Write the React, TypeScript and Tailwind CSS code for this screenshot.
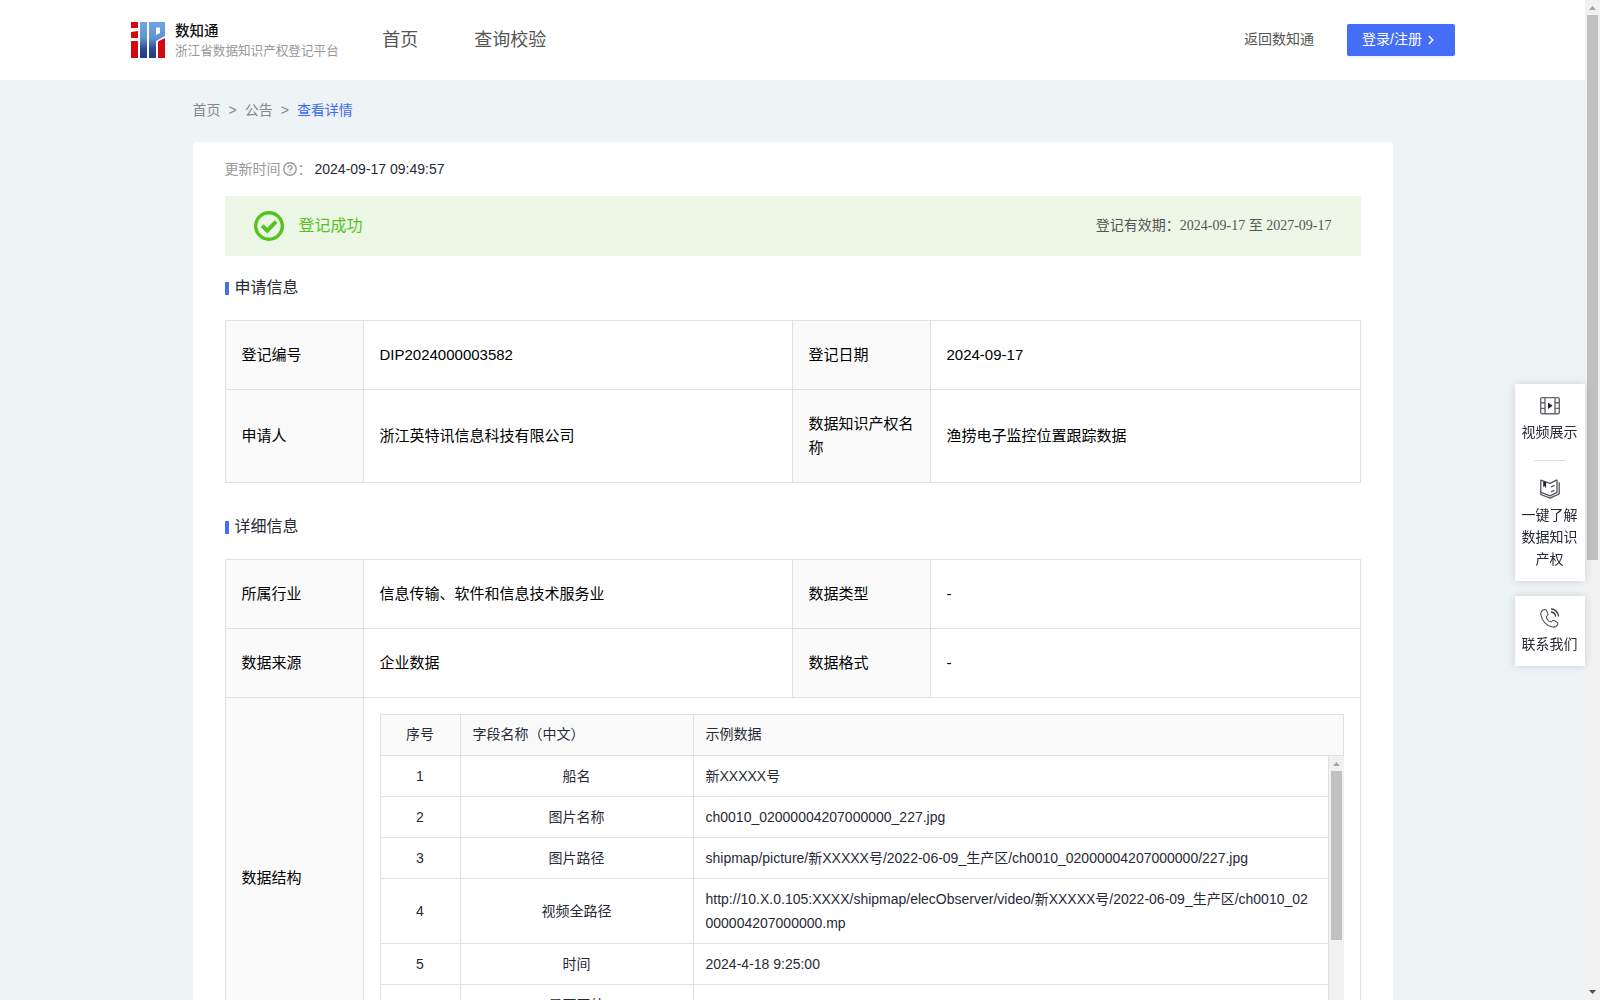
import type { ReactNode } from "react";

const applyInfo = [
  { label: "登记编号", value: "DIP2024000003582" },
  { label: "登记日期", value: "2024-09-17" },
  { label: "申请人", value: "浙江英特讯信息科技有限公司" },
  { label: "数据知识产权名称", value: "渔捞电子监控位置跟踪数据" },
];

const detailInfo = [
  { label: "所属行业", value: "信息传输、软件和信息技术服务业" },
  { label: "数据类型", value: "-" },
  { label: "数据来源", value: "企业数据" },
  { label: "数据格式", value: "-" },
];

const fields = [
  { name: "船名", sample: "新XXXXX号" },
  { name: "图片名称", sample: "ch0010_02000004207000000_227.jpg" },
  { name: "图片路径", sample: "shipmap/picture/新XXXXX号/2022-06-09_生产区/ch0010_02000004207000000/227.jpg" },
  {
    name: "视频全路径",
    sample: "http://10.X.0.105:XXXX/shipmap/elecObserver/video/新XXXXX号/2022-06-09_生产区/ch0010_02000004207000000.mp",
  },
  { name: "时间", sample: "2024-4-18 9:25:00" },
  { name: "是否国外", sample: "1" },
];

const Logo = () => (
  <svg width="34" height="36" viewBox="0 0 34 36">
    <defs>
      <linearGradient id="logoBlue" x1="0" y1="0" x2="0" y2="36" gradientUnits="userSpaceOnUse">
        <stop offset="0" stopColor="#6ea6e2" />
        <stop offset="0.45" stopColor="#6292d2" />
        <stop offset="0.75" stopColor="#2b4a94" />
        <stop offset="1" stopColor="#203c86" />
      </linearGradient>
    </defs>
    <path d="M0 0h7v6H0zM0 10l7-1v7H0zM0 19h7v17H0z" fill="#d20a10" />
    <path d="M9 0h7v36H9z" fill="url(#logoBlue)" />
    <path d="M18 0h16v14l-9 5v17h-7zM25 5.500v7.500l4-2V5.500z" fillRule="evenodd" fill="url(#logoBlue)" />
    <path d="M27 19.500l7-3.500v20h-7z" fill="#d20a10" />
  </svg>
);

const VideoIcon = () => (
  <svg width="20" height="20" viewBox="0 0 20 20" fill="none" stroke="#66676e" strokeWidth="1.4">
    <rect x="0.7" y="1.6" width="18.6" height="16.2" rx="1.5" />
    <path d="M5 1.6v16.2M15 1.6v16.2M0.7 6.8H5M0.7 12.4H5M15 6.8h4.3M15 12.4h4.3" />
    <path d="M8 6.5v6.4l4.6-3.2z" fill="#22232b" stroke="none" />
  </svg>
);

const BookIcon = () => (
  <svg width="20" height="20" viewBox="0 0 20 20" fill="none" stroke="#55565e" strokeWidth="1.3" strokeLinejoin="round">
    <path d="M17 0.800L10 4.400 0.800 1.200V15.500l9.200 3.700 9.200-4.400V3.200" />
    <path d="M17 0.800v12.600l-7 3.400L1 13.400" />
    <path d="M11 7.800l3.500-1.500M11 12.800l3.500-1.500" />
    <path d="M3.200 2v6.300l1.400-1.200 1.500 2.300V3.200z" fill="#22232b" stroke="none" />
  </svg>
);

const PhoneIcon = () => (
  <svg width="20" height="20" viewBox="0 0 20 20" fill="none" stroke="#55565d" strokeWidth="1.1" strokeLinecap="round" strokeLinejoin="round">
    <path d="M4.4 1.6C2 2.2.4 4.4 1 7.4c1 5.400 5.300 10 10.500 11.400 2.700.7 5.200-.4 6.200-2.400.5-1-.1-1.700-.8-2.200l-2.600-1.600c-.9-.5-1.600-.3-2.200.4l-.9 1c-2-.5-4.300-2.900-5-5.200l1.200-1.100c.7-.7.7-1.300.4-2.100L6.500 2.600c-.4-.9-1.200-1.200-2.100-1z" />
    <path d="M11.600 1c3.600.3 6.600 3.400 6.900 7M11.400 4c2.200.3 3.800 1.900 4.100 4" stroke="#33343c" strokeWidth="1.300" />
  </svg>
);

const SectionTitle = ({ children }: { children: ReactNode }) => (
  <div className="flex h-6 items-center text-[16px] leading-6 text-[#272a36]">
    <i className="mt-px mr-[6px] h-[13px] w-1 bg-[#446ef5]"></i>
    {children}
  </div>
);

const Cells = ({ items }: { items: { label: string; value: string }[] }) => (
  <>
    {items.map((item) => (
      <div key={item.label} className="contents">
        <div className="flex items-center border-r border-b border-[#e1e1e1] bg-[#fafafa] pr-[15px] pl-4">{item.label}</div>
        <div className="flex items-center border-r border-b border-[#e1e1e1] px-4">{item.value}</div>
      </div>
    ))}
  </>
);

const infoGrid =
  "grid grid-cols-[138px_429px_138px_430px] border-t border-l border-[#e1e1e1] text-[15px] leading-6 text-black";

const Header = () => (
  <header className="flex h-20 shrink-0 items-center bg-white pr-[130px] pl-[131px] text-[#555]">
    <Logo />
    <div className="ml-[10px] flex flex-col pt-[2px]">
      <span className="text-[14.500px] leading-[19px] font-medium text-[#111]">数知通</span>
      <span className="text-[12.600px] leading-5 text-[#999]">浙江省数据知识产权登记平台</span>
    </div>
    <nav className="ml-[43.500px] flex gap-14 text-[18px] leading-6">
      <a>首页</a>
      <a>查询校验</a>
    </nav>
    <a className="mr-[33px] ml-auto pb-px text-[14px]">返回数知通</a>
    <button className="flex h-8 w-[108px] items-center rounded-[2px] bg-[#446ef5] pb-px pl-[15px] text-[14px] text-white shadow-[0_2px_0_rgba(0,0,0,0.045)]">
      登录/注册
      <svg className="ml-[6px]" width="6" height="10" viewBox="0 0 6 10" fill="none" stroke="white" strokeWidth="1.400">
        <path d="M0.800 1l4 4-4 4" />
      </svg>
    </button>
  </header>
);

const FieldTable = () => (
  <div className="flex h-[420px] w-[964px] flex-col text-[14px] leading-6 text-[#272a36]">
    <div className="grid h-[42px] shrink-0 grid-cols-[80px_233px_1fr] border border-[#e1e1e1] bg-[#fafafa] leading-[39px]">
      <div className="border-r border-[#e1e1e1] text-center">序号</div>
      <div className="border-r border-[#e1e1e1] px-3">字段名称（中文）</div>
      <div className="px-3">示例数据</div>
    </div>
    <div className="flex min-h-0 flex-1">
      <div className="w-[949px] overflow-hidden border-l border-[#e1e1e1]">
        {fields.map((field, i) => (
          <div key={field.name} className="grid grid-cols-[80px_233px_635px]">
            <div className="flex items-center justify-center border-r border-b border-[#e1e1e1]">{i + 1}</div>
            <div className="flex items-center justify-center border-r border-b border-[#e1e1e1]">{field.name}</div>
            <div className="border-r border-b border-[#e1e1e1] py-2 pr-4 pl-3 break-all">{field.sample}</div>
          </div>
        ))}
      </div>
      <div className="flex w-[15px] flex-col items-center bg-[#f1f1f1]">
        <svg className="shrink-0" width="15" height="15" viewBox="0 0 15 15">
          <path d="M4 10l3.500-4 3.500 4z" fill="#a3a3a3" />
        </svg>
        <div className="h-[169px] w-[11px] bg-[#c1c1c1]"></div>
      </div>
    </div>
  </div>
);

const SidePanel = () => (
  <aside className="fixed top-[384px] right-[15px] flex w-[70px] flex-col gap-[15px] text-center text-[14px] leading-[22px] text-[#272a36]">
    <div className="flex h-[197px] flex-col items-center bg-white pt-3 shadow-[0_0_8px_rgba(0,0,0,0.15)]">
      <VideoIcon />
      <span className="mt-[5px] pr-px">视频展示</span>
      <i className="mt-[17px] h-px w-8 bg-[#ddd]"></i>
      <div className="mt-[18px]">
        <BookIcon />
      </div>
      <span className="mt-[5px] mr-px w-14">一键了解数据知识产权</span>
    </div>
    <div className="flex h-[70px] flex-col items-center bg-white pt-3 shadow-[0_0_8px_rgba(0,0,0,0.15)]">
      <PhoneIcon />
      <span className="mt-[5px] pr-px">联系我们</span>
    </div>
  </aside>
);

export default function App() {
  return (
    <div className="flex h-screen overflow-hidden bg-[#eef3f6] font-['Liberation_Sans','Noto_Sans_CJK_SC',sans-serif]">
      <div className="flex min-w-0 flex-1 flex-col overflow-hidden">
        <Header />
        <div className="mx-auto w-[1200px] shrink-0">
          <div className="flex h-[62px] items-center gap-2 pb-px text-[14px] text-[#888]">
            <span>首页</span>
            <span>&gt;</span>
            <span>公告</span>
            <span>&gt;</span>
            <span className="text-[#3a6af8]">查看详情</span>
          </div>

          <main className="rounded-[4px] bg-white px-8 pt-4">
            <div className="flex h-[22px] items-center text-[14px] leading-[22px] text-[#999]">
              更新时间
              <svg className="ml-[2px]" width="14" height="14" viewBox="0 0 14 14" fill="none" stroke="#999" strokeWidth="1.400">
                <circle cx="7" cy="7" r="6.200" />
                <path d="M5 5.600a2 1.900 0 1 1 3.200 1.500c-.8.500-1.200.7-1.200 1.500" />
                <circle cx="7" cy="10.200" r="0.800" fill="#999" stroke="none" />
              </svg>
              <span className="ml-px">：</span>
              <span className="ml-[3px] text-[#272a36]">2024-09-17 09:49:57</span>
            </div>

            <div className="mt-4 flex h-[60px] items-center bg-[#ecf7e6] px-[29px]">
              <svg width="30" height="30" viewBox="0 0 30 30" fill="none" stroke="#52c41a">
                <circle cx="15" cy="15" r="13.300" strokeWidth="3.400" />
                <path d="M8.200 14.800l5 4.800 8.900-9" strokeWidth="4" />
              </svg>
              <span className="ml-[15px] text-[16px] text-[#52c41a]">登记成功</span>
              <div className="ml-auto pb-[2px] font-['Liberation_Serif','Noto_Sans_CJK_SC',serif] text-[14px] text-[#555]">
                登记有效期：2024-09-17 至 2027-09-17
              </div>
            </div>

            <div className="mt-5">
              <SectionTitle>申请信息</SectionTitle>
            </div>
            <div className={`${infoGrid} mt-5 grid-rows-[69px_93px]`}>
              <Cells items={applyInfo} />
            </div>

            <div className="mt-8">
              <SectionTitle>详细信息</SectionTitle>
            </div>
            <div className={`${infoGrid} mt-5 grid-rows-[69px_69px]`}>
              <Cells items={detailInfo} />
              <div className="flex h-[361px] items-center border-r border-b border-[#e1e1e1] bg-[#fafafa] px-4">数据结构</div>
              <div className="col-span-3 h-[361px] overflow-hidden border-r border-[#e1e1e1] pt-4 pl-4">
                <FieldTable />
              </div>
            </div>
          </main>
        </div>
      </div>

      {/* page scrollbar */}
      <div className="flex w-[15px] shrink-0 flex-col items-center bg-[#f1f1f1]">
        <svg className="shrink-0" width="15" height="15" viewBox="0 0 15 15">
          <path d="M4 10l3.500-4 3.500 4z" fill="#a3a3a3" />
        </svg>
        <div className="h-[545px] w-[11px] bg-[#c1c1c1]"></div>
        <svg className="mt-auto shrink-0" width="15" height="15" viewBox="0 0 15 15">
          <path d="M4 5l3.500 4L11 5z" fill="#505050" />
        </svg>
      </div>

      <SidePanel />
    </div>
  );
}
